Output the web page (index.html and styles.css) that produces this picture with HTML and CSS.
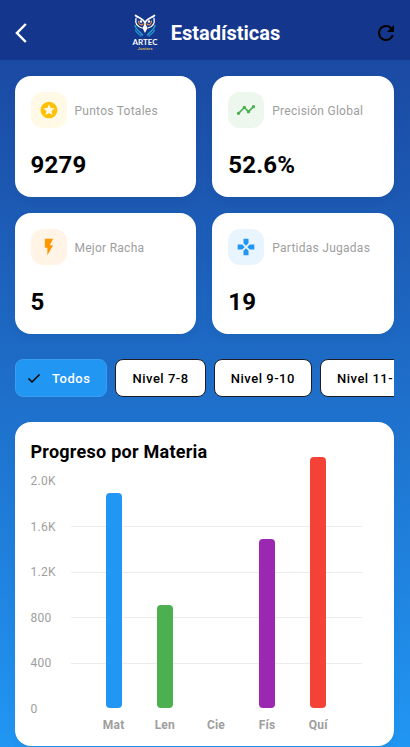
FILE: index.html
```html
<!DOCTYPE html>
<html lang="es">
<head>
    <meta charset="UTF-8">
    <meta name="viewport" content="width=device-width, initial-scale=1.0">
    <title>Estadísticas</title>
    <link rel="stylesheet" href="styles.css">
</head>
<body>
    <header class="app-bar">
        <button class="icon-button" aria-label="Volver">
            <svg width="12" height="20" viewBox="0 0 12 20"><path d="M10.8 1 2 10l8.800 9" fill="none" stroke="#fff" stroke-width="2.5"/></svg>
        </button>
        <div class="brand">
            <svg class="logo" width="28" height="38" viewBox="0 0 28 38">
                <g fill="none" stroke-linecap="round">
                    <path d="M4.500 1.500C8 4.500 12 4 14 9 16 4 20 4.500 23.500 1.500" stroke="#fff" stroke-width="1.700"/>
                    <path d="M5 4.500c-1 4.500 1 8 6 9.500M23 4.500c1 4.500-1 8-6 9.500" stroke="#fff" stroke-width="1.300"/>
                    <path d="M7.500 7c0 3.500 2.500 5 4.500 3M20.500 7c0 3.500-2.500 5-4.500 3" stroke="#f58a3c" stroke-width="1.200"/>
                    <path d="M4 11.500c.5 4.500 4.500 5 7.500 9.500M24 11.500c-.5 4.500-4.500 5-7.500 9.500" stroke="#27a5cf" stroke-width="1.400"/>
                    <path d="M4.500 16c1 3.500 3.500 3.500 5.500 6M23.500 16c-1 3.500-3.500 3.500-5.500 6" stroke="#2a8bd0" stroke-width="1.300"/>
                </g>
                <circle cx="10" cy="7.500" r="1.200" fill="#fff"/>
                <circle cx="18" cy="7.500" r="1.200" fill="#fff"/>
                <path d="M14 9l2.500 5L14 19l-2.500-5z" fill="#fff"/>
                <text class="logo-name" x="14" y="31" text-anchor="middle" textLength="25" lengthAdjust="spacingAndGlyphs">ARTEC</text>
                <text class="logo-sub" x="14" y="35.500" text-anchor="middle" textLength="15">Juniors</text>
            </svg>
            <h1>Estadísticas</h1>
        </div>
        <button class="icon-button" aria-label="Actualizar">
            <svg width="24" height="24" viewBox="0 0 24 24"><path d="M17.650 6.350A7.960 7.960 0 0 0 12 4a8 8 0 1 0 7.730 10h-2.080A6 6 0 1 1 12 6c1.660 0 3.140.69 4.220 1.780L13 11h7V4z"/></svg>
        </button>
    </header>

    <main>
        <section class="stats">
            <article class="card stat">
                <div class="stat-head">
                    <span class="stat-icon points">
                        <svg viewBox="0 0 24 24"><path d="M11.990 2C6.470 2 2 6.480 2 12s4.470 10 9.990 10C17.520 22 22 17.520 22 12S17.520 2 11.990 2zm4.240 16L12 15.450 7.770 18l1.120-4.810-3.730-3.230 4.920-.42L12 5l1.920 4.530 4.920.42-3.730 3.230L16.230 18z"/></svg>
                    </span>
                    <span class="stat-label">Puntos Totales</span>
                </div>
                <div class="stat-value">9279</div>
            </article>
            <article class="card stat">
                <div class="stat-head">
                    <span class="stat-icon accuracy">
                        <svg viewBox="0 0 24 24"><path d="M23 8c0 1.100-.9 2-2 2-.18 0-.35-.02-.51-.07l-3.560 3.550c.05.16.07.34.07.52 0 1.100-.9 2-2 2s-2-.9-2-2c0-.18.02-.36.07-.52l-2.550-2.550c-.16.05-.34.07-.52.07s-.36-.02-.52-.07l-4.550 4.560c.05.16.07.33.07.51 0 1.100-.9 2-2 2s-2-.9-2-2 .9-2 2-2c.18 0 .35.02.51.07l4.560-4.550C8.020 9.360 8 9.180 8 9c0-1.100.9-2 2-2s2 .9 2 2c0 .18-.02.36-.07.52l2.550 2.550c.16-.05.34-.07.52-.07s.36.02.52.07l3.550-3.560C19.020 8.350 19 8.180 19 8c0-1.100.9-2 2-2s2 .9 2 2z"/></svg>
                    </span>
                    <span class="stat-label">Precisión Global</span>
                </div>
                <div class="stat-value">52.6%</div>
            </article>
            <article class="card stat">
                <div class="stat-head">
                    <span class="stat-icon streak">
                        <svg viewBox="0 0 24 24"><path d="M7 2v11h3v9l7-12h-4l4-8z"/></svg>
                    </span>
                    <span class="stat-label">Mejor Racha</span>
                </div>
                <div class="stat-value">5</div>
            </article>
            <article class="card stat">
                <div class="stat-head">
                    <span class="stat-icon games">
                        <svg viewBox="0 0 24 24"><path d="M15 7.500V2H9v5.500l3 3 3-3zM7.500 9H2v6h5.500l3-3-3-3zM9 16.500V22h6v-5.500l-3-3-3 3zM16.500 9l-3 3 3 3H22V9h-5.500z"/></svg>
                    </span>
                    <span class="stat-label">Partidas Jugadas</span>
                </div>
                <div class="stat-value">19</div>
            </article>
        </section>

        <nav class="filters">
            <button class="chip selected">
                <svg width="18" height="18" viewBox="0 0 18 18"><path d="M2.500 9.500l3.500 3.500 7.500-7.500" fill="none" stroke="#000" stroke-width="1.500"/></svg>
                Todos
            </button>
            <button class="chip">Nivel 7-8</button>
            <button class="chip">Nivel 9-10</button>
            <button class="chip">Nivel 11-12</button>
        </nav>

        <section class="card chart-card">
            <h2>Progreso por Materia</h2>
            <div class="chart">
                <div class="y-axis">
                    <span>2.0K</span>
                    <span>1.6K</span>
                    <span>1.2K</span>
                    <span>800</span>
                    <span>400</span>
                    <span>0</span>
                </div>
                <div class="plot">
                    <div class="bar-col"><div class="bar math" style="height: 94.3%"></div><span>Mat</span></div>
                    <div class="bar-col"><div class="bar language" style="height: 45.2%"></div><span>Len</span></div>
                    <div class="bar-col"><div class="bar" style="height: 0"></div><span>Cie</span></div>
                    <div class="bar-col"><div class="bar physics" style="height: 73.9%"></div><span>Fís</span></div>
                    <div class="bar-col"><div class="bar chemistry" style="height: 110%"></div><span>Quí</span></div>
                </div>
            </div>
        </section>
    </main>
</body>
</html>
```
FILE: styles.css
```css
* {
    box-sizing: border-box;
}

body {
    margin: 0;
    height: 747px;
    overflow: hidden;
    font-family: Roboto, "Liberation Sans", sans-serif;
    color: #000000;
    background: linear-gradient(to bottom, #1a459d 0, #1b4aa3 60px, #2196f3 100%);
}

button {
    font-family: inherit;
    cursor: pointer;
}

svg {
    display: block;
    flex: none;
}

.app-bar {
    height: 60.4px;
    padding: 5px 12px 0 14.5px;
    display: grid;
    grid-template-columns: 24px 1fr 24px;
    align-items: center;
    background-color: #14368d;
}

.icon-button {
    display: flex;
    padding: 0;
    border: none;
    background: none;
}

.brand {
    display: flex;
    align-items: center;
    justify-content: center;
    gap: 12px;
    padding-right: 1.5px;
}

.brand h1 {
    margin: 0;
    font-size: 20px;
    font-weight: 700;
    line-height: 24px;
    color: #ffffff;
}

.logo-name {
    font-family: Lato, sans-serif;
    font-size: 8.4px;
    font-weight: 700;
    fill: #ffffff;
}

.logo-sub {
    font-size: 4px;
    font-weight: 700;
    fill: #d9b75b;
}

main {
    padding: 16px 16px 0 14.5px;
}

.card {
    background-color: #ffffff;
    border-radius: 16px;
    box-shadow: 0 4px 10px rgba(0, 0, 0, 0.05);
}

.stats {
    display: grid;
    grid-template-columns: 1fr 1fr;
    gap: 16px;
}

.stat {
    height: 121px;
    padding: 16px;
}

.stat-head {
    display: flex;
    align-items: center;
    gap: 8px;
}

.stat-icon {
    width: 36px;
    height: 36px;
    display: flex;
    align-items: center;
    justify-content: center;
    border-radius: 12px;
}

.stat-icon svg {
    width: 20px;
    height: 20px;
    fill: currentColor;
}

.points {
    color: #ffc107;
    background-color: #fff9e6;
}

.accuracy {
    color: #4caf50;
    background-color: #edf7ee;
}

.streak {
    color: #ff9800;
    background-color: #fff4e6;
}

.games {
    color: #2196f3;
    background-color: #e8f4fe;
}

.stat-label {
    padding-top: 1px;
    font-size: 12px;
    letter-spacing: 0.26px;
    color: #9e9e9e;
}

.stat-value {
    margin-top: 21.5px;
    font-size: 24px;
    font-weight: 700;
    line-height: 30px;
    letter-spacing: 0.2px;
}

.filters {
    margin-top: 24.6px;
    display: flex;
    gap: 8px;
    overflow: hidden;
}

.chip {
    height: 38.5px;
    padding: 0 16px;
    flex: none;
    display: flex;
    align-items: center;
    border: 1px solid #1d1d1f;
    border-radius: 8px;
    background-color: #ffffff;
    color: #000000;
    font-size: 13px;
    font-weight: 500;
    letter-spacing: 0.52px;
}

.chip.selected {
    padding-left: 10.5px;
    gap: 8px;
    border-color: #389eef;
    background-color: #2196f3;
    color: #ffffff;
}

.chart-card {
    margin-top: 24.5px;
    height: 324px;
    padding: 17.7px 16px;
}

.chart-card h2 {
    margin: 0;
    font-size: 18px;
    font-weight: 700;
    line-height: 24px;
    letter-spacing: 0.25px;
}

.chart {
    margin-top: 16.3px;
    display: flex;
}

.y-axis {
    width: 40px;
    height: 242px;
    margin-top: -6px;
    display: flex;
    flex-direction: column;
    justify-content: space-between;
    font-size: 12px;
    line-height: 14px;
    letter-spacing: 0.3px;
    color: #9e9e9e;
}

.plot {
    width: 291px;
    height: 228px;
    display: flex;
    justify-content: space-evenly;
    background: repeating-linear-gradient(to top, transparent 0 44.6px, #ececec 44.6px 45.6px);
    background-size: 100% 182.4px;
    background-position: bottom;
    background-repeat: no-repeat;
}

.bar-col {
    width: 16px;
    height: 251px;
    display: grid;
    grid-template-columns: 16px;
    grid-template-rows: 228px 23px;
    justify-items: center;
    align-items: end;
}

.bar {
    width: 16px;
    border-radius: 4px;
}

.bar-col span {
    font-size: 12px;
    font-weight: 700;
    line-height: 12px;
    letter-spacing: 0.2px;
    color: #9e9e9e;
}

.math {
    background-color: #2196f3;
}

.language {
    background-color: #4caf50;
}

.physics {
    background-color: #9c27b0;
}

.chemistry {
    background-color: #f44336;
}
```
